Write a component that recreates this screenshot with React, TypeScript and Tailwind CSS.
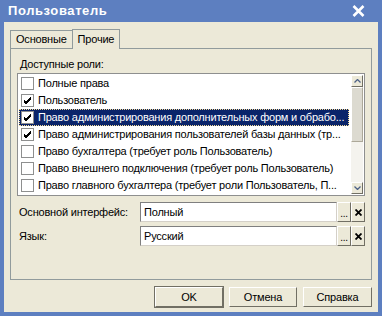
import { Fragment } from 'react'

type Role = { title: string; checked: boolean; selected?: boolean }

const roles: Role[] = [
  { title: 'Полные права', checked: false },
  { title: 'Пользователь', checked: true },
  { title: 'Право администрирования дополнительных форм и обрабо...', checked: true, selected: true },
  { title: 'Право администрирования пользователей базы данных (тр...', checked: true },
  { title: 'Право бухгалтера (требует роль Пользователь)', checked: false },
  { title: 'Право внешнего подключения  (требует роль Пользователь)', checked: false },
  { title: 'Право главного бухгалтера (требует роли Пользователь, П...', checked: false },
]

function Check({ on }: { on: boolean }) {
  return (
    <div className="w-[13px] h-[13px] shrink-0 bg-white border border-[#8e8f8f] flex items-center justify-center">
      {on && (
        <svg width="9" height="9" viewBox="0 0 9 9">
          <path d="M1 4 L3 6 L8 1 M1 5 L3 7 L8 2 M1 6 L3 8 L8 3" stroke="#000" strokeWidth="1" fill="none" />
        </svg>
      )}
    </div>
  )
}

function Btn3d({ children, className = '' }: { children: React.ReactNode; className?: string }) {
  return (
    <div
      className={`flex items-center justify-center bg-[#ece9d8] border border-t-white border-l-white border-r-[#716f64] border-b-[#716f64] ${className}`}
    >
      {children}
    </div>
  )
}

function Field({ label, value }: { label: string; value: string }) {
  return (
    <Fragment>
      <div className="flex items-center h-[20px]">{label}</div>
      <div className="flex h-[20px]">
        <div className="flex-1 bg-white border border-[#7f7f7f] border-r-[#d4d0c8] border-b-[#d4d0c8] flex items-center pl-[3px]">
          {value}
        </div>
        <Btn3d className="w-[14px] text-[10px] leading-none pt-[4px]">...</Btn3d>
        <Btn3d className="w-[14px]">
          <svg width="7" height="7" viewBox="0 0 7 7">
            <path d="M0.5 0.5 L6.5 6.5 M6.5 0.5 L0.5 6.5" stroke="#000" strokeWidth="1.8" />
          </svg>
        </Btn3d>
      </div>
    </Fragment>
  )
}

export default function App() {
  return (
    <div
      className="w-[382px] h-[316px] bg-[#5d7fc0] flex flex-col px-[4px] pb-[4px] text-[11px] tracking-[-0.2px] text-black select-none"
      style={{ fontFamily: '"Liberation Sans", Arial, sans-serif' }}
    >
      <div className="h-[22px] flex items-center justify-between pl-[4px] pr-[13px]">
        <span className="text-white font-bold text-[13px] tracking-[0.6px]">Пользователь</span>
        <svg width="13" height="12" viewBox="0 0 13 12">
          <path d="M1.5 1 L11.5 11 M11.5 1 L1.5 11" stroke="#fff" strokeWidth="2.6" />
        </svg>
      </div>

      <div className="flex-1 bg-[#ece9d8] flex flex-col px-[6px] pt-[6px]">
        <div className="flex items-end h-[20px]">
          <div className="h-[18px] px-[5px] flex items-center border border-b-0 border-[#919b9c] bg-[#ece9d8]">Основные</div>
          <div className="h-[20px] px-[5px] flex items-center border border-b-0 border-[#919b9c] bg-[#ece9d8] -ml-px relative top-px z-10">
            Прочие
          </div>
        </div>

        <div className="h-[232px] border border-[#919b9c] flex flex-col px-[6px] pt-[8px]">
          <div className="h-[14px] leading-[14px] pl-[3px]">Доступные роли:</div>
          <div className="mt-[2px] h-[123px] border border-[#8e8f8f] bg-white flex p-[1px]">
            <div className="flex-1 flex flex-col min-w-0">
              {roles.map((r) => (
                <div
                  key={r.title}
                  className={`h-[17px] flex items-center gap-[4px] pl-[2px] pr-[2px] whitespace-nowrap overflow-hidden ${
                    r.selected ? 'bg-[#0a246a] text-white outline outline-1 outline-dotted outline-[#f5db95] -outline-offset-1' : ''
                  }`}
                >
                  <Check on={r.checked} />
                  <span>{r.title}</span>
                </div>
              ))}
            </div>
            <div className="w-[12px] ml-[2px] bg-[#f4f3ee] flex flex-col">
              <Btn3d className="h-[12px]">
                <svg width="7" height="4" viewBox="0 0 7 4">
                  <path d="M0.5 3.5 L3.5 0.5 L6.5 3.5" stroke="#4d6185" strokeWidth="1.3" fill="none" />
                </svg>
              </Btn3d>
              <div className="h-[55px] bg-[#dcdad0] border border-t-white border-l-white border-r-[#aca899] border-b-[#aca899]" />
              <div className="flex-1" />
              <Btn3d className="h-[12px]">
                <svg width="7" height="4" viewBox="0 0 7 4">
                  <path d="M0.5 0.5 L3.5 3.5 L6.5 0.5" stroke="#4d6185" strokeWidth="1.3" fill="none" />
                </svg>
              </Btn3d>
            </div>
          </div>

          <div className="mt-[6px] grid grid-cols-[121px_1fr] gap-y-[4px] pl-[2px]">
            <Field label="Основной интерфейс:" value="Полный" />
            <Field label="Язык:" value="Русский" />
          </div>
        </div>

        <div className="flex justify-end gap-[6px] pt-[7px]">
          <Btn3d className="w-[68px] h-[20px] outline outline-1 outline-[#716f64]">OK</Btn3d>
          <Btn3d className="w-[68px] h-[20px]">Отмена</Btn3d>
          <Btn3d className="w-[69px] h-[20px]">Справка</Btn3d>
        </div>
      </div>
    </div>
  )
}
